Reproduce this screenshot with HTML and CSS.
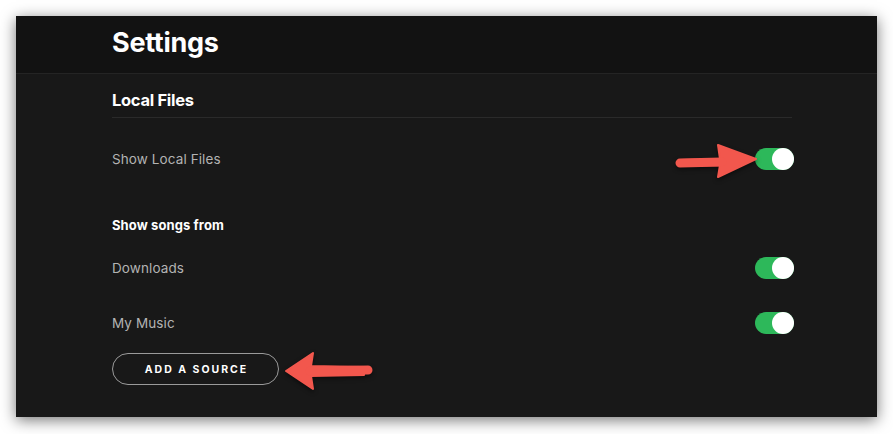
FILE: index.html
```html
<!DOCTYPE html>
<html>
<head>
<meta charset="utf-8">
<link rel="stylesheet" href="styles.css">
</head>
<body>
<div class="window">
  <header class="topbar">
    <h1 class="title">Settings</h1>
  </header>
  <main class="content">
    <h2 class="section-title">Local Files</h2>
    <div class="row row-main">
      <span class="label">Show Local Files</span>
      <span class="toggle on"><span class="knob"></span></span>
    </div>
    <h3 class="subhead">Show songs from</h3>
    <div class="row">
      <span class="label">Downloads</span>
      <span class="toggle on"><span class="knob"></span></span>
    </div>
    <div class="row">
      <span class="label">My Music</span>
      <span class="toggle on"><span class="knob"></span></span>
    </div>
    <button class="add-btn">ADD A SOURCE</button>
  </main>
  <svg class="arrow arrow-1" width="90" height="44" viewBox="0 0 90 44">
    <path d="M8 20 L48 19 L46 5 L84 19 L46 37 L48 25 L8 26 Z" fill="#f2574d" stroke="#f2574d" stroke-width="2" stroke-linejoin="round"/>
    <line x1="8" y1="23" x2="50" y2="22" stroke="#f2574d" stroke-width="9" stroke-linecap="round"/>
  </svg>
  <svg class="arrow arrow-2" width="100" height="44" viewBox="0 0 100 44">
    <path d="M4 21 L31 3 L29 16 L82 17 L82 25 L29 26 L31 39 Z" fill="#f2574d" stroke="#f2574d" stroke-width="2" stroke-linejoin="round"/>
    <line x1="28" y1="21" x2="86" y2="20" stroke="#f2574d" stroke-width="9" stroke-linecap="round"/>
  </svg>
</div>
</body>
</html>
```

FILE: styles.css
```css
* { box-sizing: border-box; }
html, body { margin: 0; padding: 0; background: #ffffff; }
body {
  font-family: "Inter", "Liberation Sans", sans-serif;
  width: 893px;
  height: 434px;
  overflow: hidden;
}
.window {
  position: relative;
  margin: 16px 0 0 16px;
  width: 861px;
  height: 401px;
  background: #181818;
  box-shadow: 0 3px 14px rgba(0,0,0,0.55);
  display: flex;
  flex-direction: column;
}
.topbar {
  height: 58px;
  background: #121212;
  border-bottom: 1px solid #242424;
  padding: 0 0 5px 96px;
  display: flex;
  align-items: center;
}
.title {
  margin: 0;
  color: #ffffff;
  font-size: 27px;
  font-weight: 700;
  letter-spacing: -0.3px;
}
.content {
  padding: 0 85px 0 96px;
  display: flex;
  flex-direction: column;
}
.section-title {
  margin: 0;
  padding: 17px 0 7px;
  border-bottom: 1px solid #2a2a2a;
  color: #ffffff;
  font-size: 16.5px;
  font-weight: 700;
  letter-spacing: -0.3px;
  line-height: 19px;
}
.row {
  display: flex;
  justify-content: space-between;
  align-items: center;
  height: 22px;
  margin-top: 23px;
}
.row-main { margin-top: 30px; }
.row + .row { margin-top: 33px; }
.label {
  color: #b3b3b3;
  font-size: 13.5px;
  letter-spacing: 0.1px;
}
.subhead {
  margin: 46px 0 0;
  color: #ffffff;
  font-size: 13px;
  font-weight: 700;
  line-height: 18px;
  letter-spacing: 0.1px;
}
.toggle {
  position: relative;
  width: 39px;
  height: 22px;
  border-radius: 11px;
  background: #2db85a;
  margin-right: -2px;
}
.knob {
  position: absolute;
  right: 0;
  top: 0;
  width: 22px;
  height: 22px;
  border-radius: 50%;
  background: #ffffff;
}
.add-btn {
  align-self: flex-start;
  margin-top: 19px;
  width: 167px;
  height: 32px;
  border: 1px solid #9a9a9a;
  border-radius: 16px;
  background: transparent;
  color: #ffffff;
  font-family: "Inter", "Liberation Sans", sans-serif;
  font-size: 10.5px;
  font-weight: 700;
  letter-spacing: 2px;
  padding: 0 0 0 2px;
}
.arrow {
  position: absolute;
  filter: drop-shadow(0 2px 2px rgba(0,0,0,0.5));
}
.arrow-1 { left: 656px; top: 124px; }
.arrow-2 { left: 266px; top: 334px; }
```
